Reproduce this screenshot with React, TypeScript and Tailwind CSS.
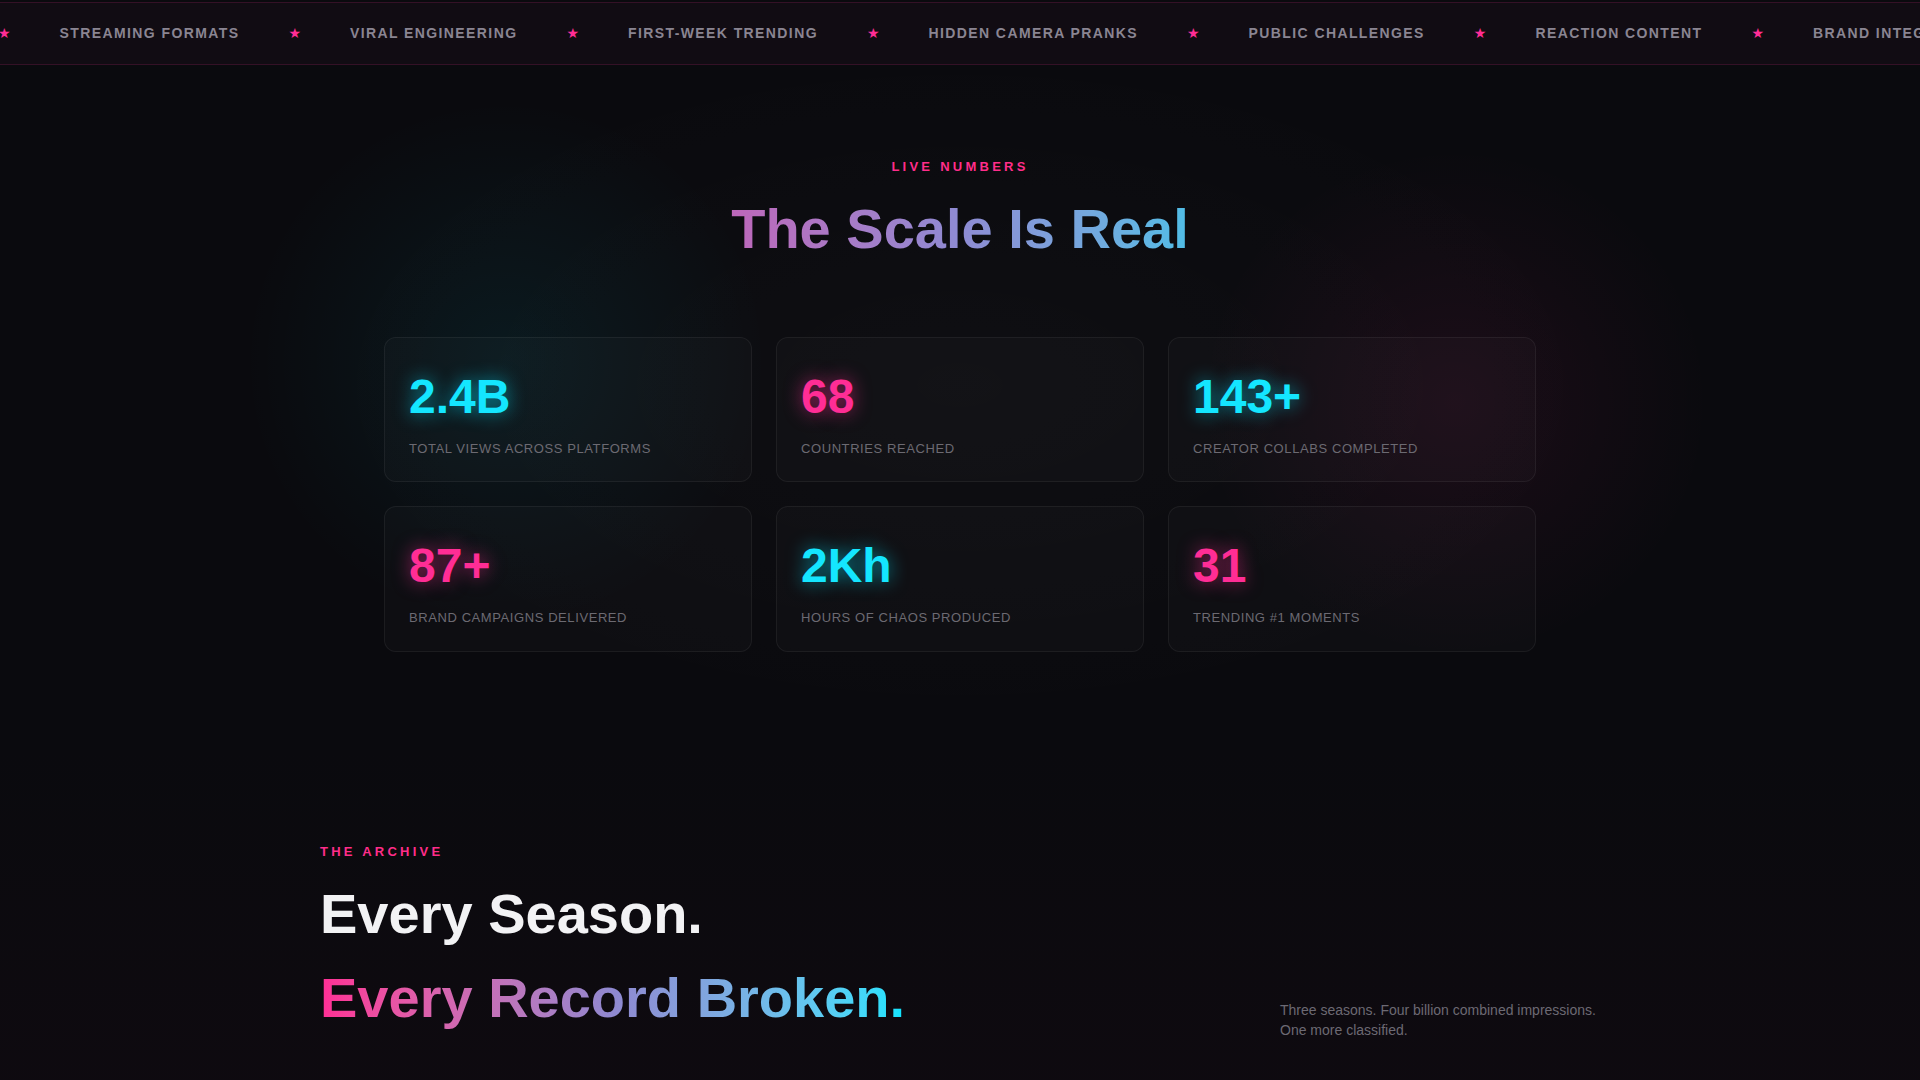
import React from 'react';

const tickerItems = [
  'STREAMING FORMATS',
  'VIRAL ENGINEERING',
  'FIRST-WEEK TRENDING',
  'HIDDEN CAMERA PRANKS',
  'PUBLIC CHALLENGES',
  'REACTION CONTENT',
  'BRAND INTEGRATIONS',
  'LIVE EVENTS',
];

interface Stat {
  value: string;
  label: string;
  tone: 'cyan' | 'pink';
}

const stats: Stat[] = [
  { value: '2.4B', label: 'Total views across platforms', tone: 'cyan' },
  { value: '68', label: 'Countries reached', tone: 'pink' },
  { value: '143+', label: 'Creator collabs completed', tone: 'cyan' },
  { value: '87+', label: 'Brand campaigns delivered', tone: 'pink' },
  { value: '2Kh', label: 'Hours of chaos produced', tone: 'cyan' },
  { value: '31', label: 'Trending #1 moments', tone: 'pink' },
];

function Ticker() {
  return (
    <div className="pt-[2px]">
      <div className="overflow-hidden border-y border-[#ff2d95]/15 bg-[#110c13] py-5">
        <div className="-ml-[2px] flex items-center gap-[49px] whitespace-nowrap">
          {tickerItems.map((item) => (
            <React.Fragment key={item}>
              <span className="font-['DejaVu_Sans',sans-serif] text-[14px] leading-[21px] text-[#ff2d95]">
                ★
              </span>
              <span className="text-[14px] font-bold leading-[21px] tracking-[0.1em] text-[#8a8592]">
                {item}
              </span>
            </React.Fragment>
          ))}
        </div>
      </div>
    </div>
  );
}

function StatCard({ stat }: { stat: Stat }) {
  const cyan = stat.tone === 'cyan';
  return (
    <div className="rounded-xl border border-white/[0.06] bg-white/[0.018] px-6 pt-[23px] pb-[23px]">
      <div
        className={
          cyan
            ? 'text-[48px] font-bold text-[#14e6ff] [text-shadow:0_0_18px_rgba(0,229,255,0.6)]'
            : 'text-[48px] font-bold text-[#ff2d95] [text-shadow:0_0_18px_rgba(255,45,149,0.6)]'
        }
      >
        {stat.value}
      </div>
      <div className="mt-1.5 text-[13px] uppercase tracking-[0.045em] text-[#6c6a72]">
        {stat.label}
      </div>
    </div>
  );
}

export default function App() {
  return (
    <div className="min-h-screen overflow-hidden bg-[#0a0a0e] font-['Liberation_Sans',Arial,sans-serif]">
      <Ticker />

      {/* Live numbers */}
      <section className="relative pt-[92px] pb-[100px]">
        <div className="pointer-events-none absolute left-[260px] top-[-40px] h-[720px] w-[1400px] rounded-full bg-[radial-gradient(ellipse,rgba(255,255,255,0.018),transparent_68%)]" />
        <div className="pointer-events-none absolute left-[206px] top-[-3px] h-[600px] w-[600px] rounded-full bg-[radial-gradient(circle,rgba(0,229,255,0.065),transparent_62%)]" />
        <div className="pointer-events-none absolute left-[1155px] top-[37px] h-[600px] w-[600px] rounded-full bg-[radial-gradient(circle,rgba(255,45,149,0.07),transparent_60%)]" />

        <div className="relative text-center">
          <p className="mb-[10px] text-[13px] font-bold tracking-[0.25em] text-[#ff2d8a]">LIVE NUMBERS</p>
          <h2 className="mb-[66px] text-[56px] font-bold">
            <span className="bg-gradient-to-r from-[#bd67ba] via-[#8e8bd3] to-[#4fbde6] bg-clip-text text-transparent">
              The Scale Is Real
            </span>
          </h2>
        </div>

        <div className="relative mx-auto grid max-w-6xl grid-cols-3 gap-6">
          {stats.map((stat) => (
            <StatCard key={stat.value} stat={stat} />
          ))}
        </div>
      </section>

      {/* Archive */}
      <section className="bg-gradient-to-b from-[#0a0a0e] to-[#0f0a10] pt-[90px] pb-24">
        <div className="mx-auto flex max-w-7xl items-end justify-between">
          <div>
            <p className="mb-[11px] text-[13px] font-bold tracking-[0.25em] text-[#ff2d8a]">THE ARCHIVE</p>
            <h2 className="text-[56px] font-bold leading-[1.5] text-[#f2f2f4]">
              Every Season.
              <br />
              <span className="bg-gradient-to-r from-[#ff2d95] via-[#8f88d0] to-[#00e5ff] bg-clip-text text-transparent">
                Every Record Broken.
              </span>
            </h2>
          </div>
          <p className="max-w-xs text-sm text-[#6c6973]">
            Three seasons. Four billion combined impressions. One more classified.
          </p>
        </div>
      </section>
    </div>
  );
}
